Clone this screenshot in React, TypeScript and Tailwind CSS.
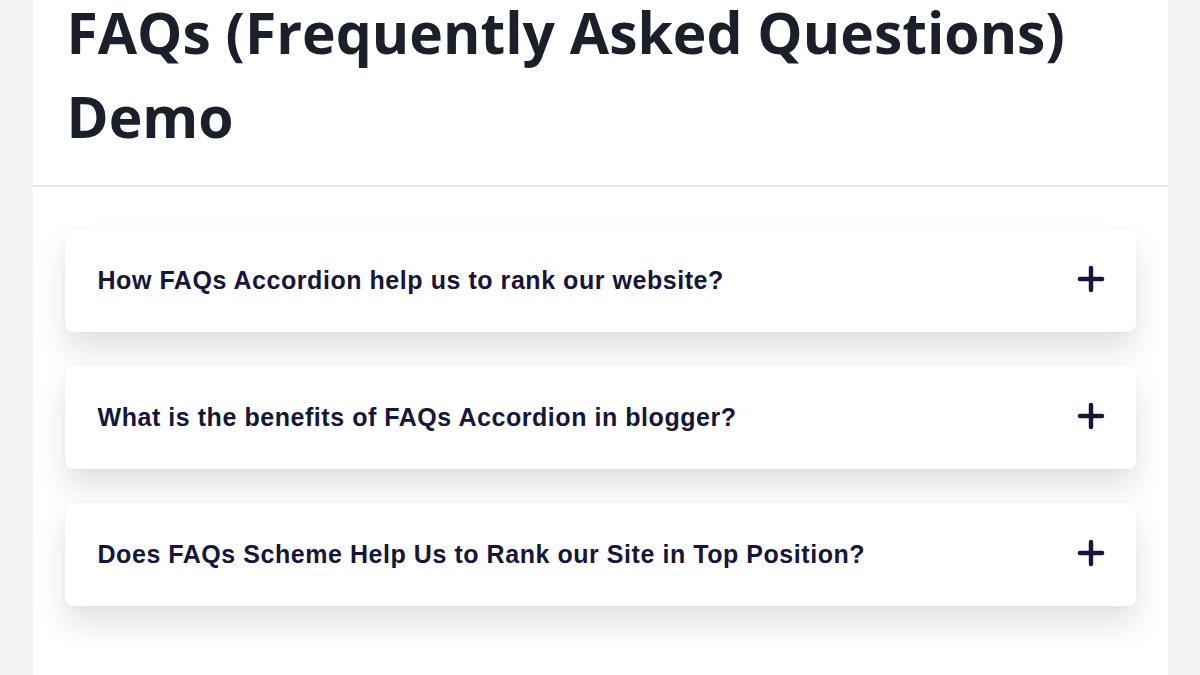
import { Plus } from 'lucide-react';

const faqs = [
  'How FAQs Accordion help us to rank our website?',
  'What is the benefits of FAQs Accordion in blogger?',
  'Does FAQs Scheme Help Us to Rank our Site in Top Position?',
];

export default function App() {
  return (
    <div className="h-[675px] w-full overflow-hidden bg-[#f3f4f6]">
      <div className="mx-auto min-h-[720px] w-[1135px] bg-white">
        {/* Header */}
        <div className="border-b-2 border-[#e6e6e8] px-[34px] pb-[27px]">
          <h1
            className="-mt-[10px] text-[57px] font-bold leading-[84px] text-[#1b1f29]"
            style={{ fontFamily: '"Open Sans", "Noto Sans", sans-serif' }}
          >
            FAQs (Frequently Asked Questions) Demo
          </h1>
        </div>

        {/* Accordion list */}
        <div className="flex flex-col gap-[34px] px-8 pt-[42px]">
          {faqs.map((q) => (
            <button
              key={q}
              className="flex h-[103px] w-full items-center justify-between rounded-lg bg-white pl-[33px] pr-[26px] text-left shadow-[0_18px_30px_rgba(20,20,40,0.12),0_0_6px_rgba(20,20,40,0.03)]"
            >
              <span
                className="text-[25px] font-bold tracking-[0.55px] text-[#15163a]"
                style={{ fontFamily: '"Liberation Sans", Arial, sans-serif' }}
              >
                {q}
              </span>
              <Plus className="-mt-[3px] h-[38px] w-[38px] text-[#15163a]" strokeWidth={2.8} />
            </button>
          ))}
        </div>
      </div>
    </div>
  );
}
